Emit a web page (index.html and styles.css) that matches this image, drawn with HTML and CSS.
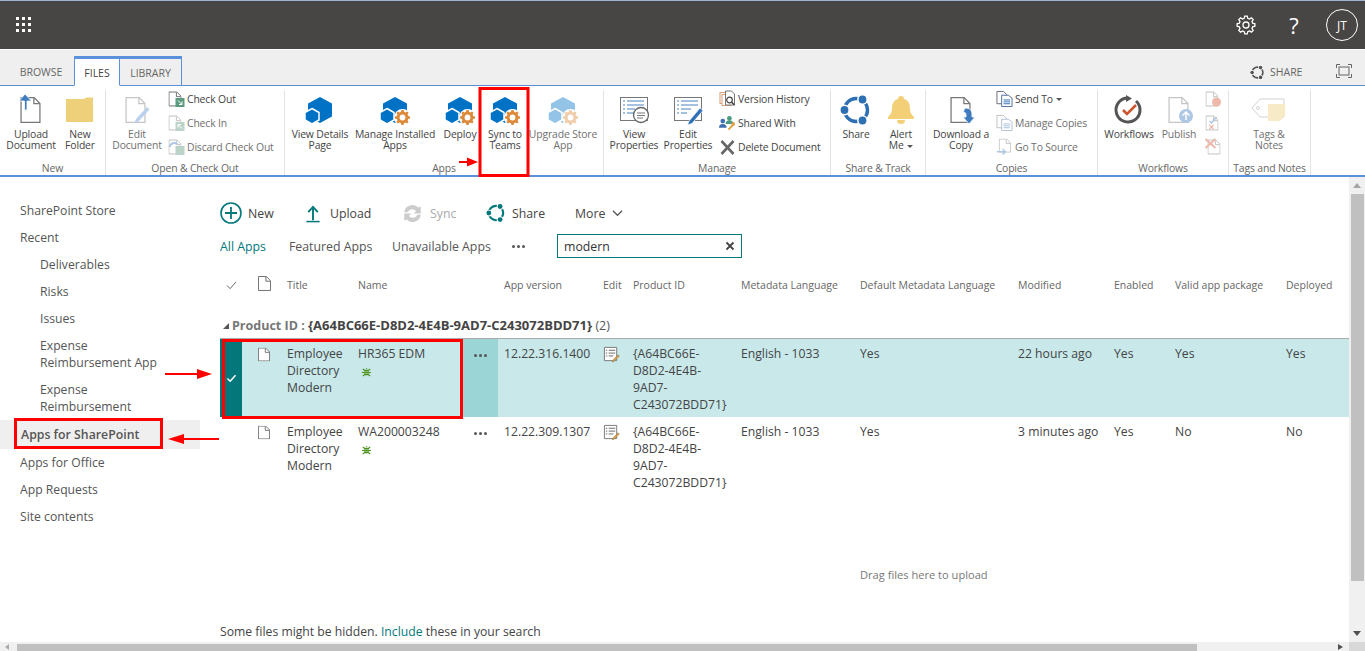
FILE: index.html
```html
<!DOCTYPE html>
<html lang="en">
<head>
<meta charset="utf-8">
<title>Apps for SharePoint</title>
<link rel="stylesheet" href="styles.css">
</head>
<body>
<svg class="defs" aria-hidden="true">
  <defs>
    <polygon id="gearshape" points="8.21,3.34 8.75,1.1 11.25,1.1 11.79,3.34 13.44,4.02 15.41,2.82 17.18,4.59 15.98,6.56 16.66,8.21 18.9,8.75 18.9,11.25 16.66,11.79 15.98,13.44 17.18,15.41 15.41,17.18 13.44,15.98 11.79,16.66 11.25,18.9 8.75,18.9 8.21,16.66 6.56,15.98 4.59,17.18 2.82,15.41 4.02,13.44 3.34,11.79 1.1,11.25 1.1,8.75 3.34,8.21 4.02,6.56 2.82,4.59 4.59,2.82 6.56,4.02"/>
    <symbol id="gear-o" viewBox="0 0 20 20">
      <circle cx="10" cy="10" r="10" fill="#fff"/>
      <use href="#gearshape" fill="#dc8a3a"/>
      <circle cx="10" cy="10" r="3.400" fill="#fff"/>
    </symbol>
    <symbol id="hex" viewBox="0 0 40 32">
      <g transform="translate(0 1)">
        <path d="M20 2l12 6.500v13L20 28 8 21.500v-13z" fill="#0072c6"/>
        <path d="M12 15.500l7 4v7.500l-7 4-7-4v-7.500z" fill="#0072c6" stroke="#fff" stroke-width="1.500" transform="translate(0 -2)"/>
      </g>
    </symbol>
    <symbol id="hexgear" viewBox="0 0 40 32">
      <use href="#hex"/>
      <use href="#gear-o" x="19" y="15" width="17" height="17"/>
    </symbol>
    <symbol id="doc" viewBox="0 0 21 27">
      <path d="M.7.700h13.600l6 6v19.600H.7z" fill="#fff" stroke="#777" stroke-width="1.300"/>
      <path d="M14 1v6h6" fill="none" stroke="#777" stroke-width="1.300"/>
    </symbol>
    <symbol id="doc-s" viewBox="0 0 14 16">
      <path d="M.5.500h8.500l4.500 4.500v10.500H.5z" fill="#fff" stroke="#666"/>
      <path d="M8.500 1v4.500H13" fill="none" stroke="#666"/>
    </symbol>
    <symbol id="lines" viewBox="0 0 18 18">
      <path d="M1 1h7l3 3v10H1z" fill="#fff" stroke="#667"/>
      <path d="M6 5h7l4 3v9H6z" fill="#fff" stroke="#4a6a9a"/>
      <path d="M8 10h7M8 12h7M8 14h7" stroke="#2f6fb5"/>
    </symbol>
    <symbol id="note" viewBox="0 0 20 18">
      <path d="M2.500 1.500h13v14h-13z" fill="#fff" stroke="#777" stroke-width="1"/>
      <path d="M4 4.500h1.500M7 4.500h7M4 7.500h1.500M7 7.500h7M4 10.500h1.500M7 10.500h5" stroke="#666" stroke-width="1"/>
      <path d="M11.500 14.800l5.500-5.500 1.300 1.300-5.500 5.500-2 .7z" fill="#d9a24e" stroke="#8a6a30" stroke-width=".5"/>
    </symbol>
    <symbol id="bug" viewBox="0 0 12 12">
      <path d="M2 2l8 8M10 2l-8 8M1 6h10M6 1v1" stroke="#4d9222" stroke-width="1.300" fill="none"/>
      <rect x="3.500" y="3" width="5" height="6" fill="#4d9222"/>
      <path d="M3.500 5h5M3.500 7h5" stroke="#c8e8c0" stroke-width=".6"/>
    </symbol>
    <symbol id="ring" viewBox="0 0 32 32">
      <circle cx="16" cy="16" r="11.500" fill="none" stroke="currentColor" stroke-width="3.400"/>
      <circle cx="22.500" cy="5.500" r="5.400" fill="#fff"/>
      <circle cx="4.500" cy="16" r="5.400" fill="#fff"/>
      <circle cx="22.500" cy="26.500" r="5.400" fill="#fff"/>
      <circle cx="22.500" cy="5.500" r="3.900" fill="currentColor"/>
      <circle cx="4.500" cy="16" r="3.900" fill="currentColor"/>
      <circle cx="22.500" cy="26.500" r="3.900" fill="currentColor"/>
    </symbol>
  </defs>
</svg>

<header class="suite">
  <div class="waffle"><i></i><i></i><i></i><i></i><i></i><i></i><i></i><i></i><i></i></div>
  <div class="suite-right">
    <svg class="suite-gear" viewBox="0 0 20 20"><use href="#gearshape" fill="none" stroke="#fff" stroke-width="1.300"/><circle cx="10" cy="10" r="3" fill="none" stroke="#fff" stroke-width="1.300"/></svg>
    <span class="suite-help">?</span>
    <span class="avatar">JT</span>
  </div>
</header>

<nav class="tabs">
  <span class="tab">BROWSE</span>
  <span class="tab tab-files">FILES</span>
  <span class="tab tab-lib">LIBRARY</span>
  <div class="tabs-right">
    <svg class="share-ic" viewBox="0 0 32 32"><use href="#ring"/></svg>
    <span class="share-txt">SHARE</span>
    <svg class="focus-ic" viewBox="0 0 16 14"><path d="M.5 4V.5H4M12 .5h3.500V4M15.500 10v3.500H12M4 13.500H.5V10" fill="none" stroke="#666"/><rect x="3" y="3" width="10" height="8" fill="none" stroke="#666"/></svg>
  </div>
</nav>

<section class="ribbon">
  <div class="group g1">
    <div class="cmds">
      <div class="lg w50">
        <svg class="ic" viewBox="0 0 40 32"><g transform="translate(9 3)"><use href="#doc" width="21" height="26"/></g><path d="M13.500 16V7H8l6-7 6.500 7H16v9z" fill="#3f7cbf" stroke="#fff" stroke-width=".8"/></svg>
        <span>Upload<br>Document</span>
      </div>
      <div class="lg w48">
        <svg class="ic" viewBox="0 0 40 32"><path d="M6 5h18l2-1.500h7V28H6z" fill="#eecf7a"/></svg>
        <span>New<br>Folder</span>
      </div>
    </div>
    <div class="glabel">New</div>
  </div>

  <div class="group g2">
    <div class="cmds">
      <div class="lg w50 off">
        <svg class="ic" viewBox="0 0 40 32"><g transform="translate(8 3)"><use href="#doc" width="21" height="26"/></g><path d="M19 25l11-12 2.500 2.500-11 12-4 1.500z" fill="#5b93d0"/></svg>
        <span>Edit<br>Document</span>
      </div>
      <div class="smalls">
        <div class="sm"><svg class="sic" viewBox="0 0 16 18"><use href="#doc-s" width="13" height="16" y="1"/><rect x="7" y="8" width="9" height="9" fill="#5c9a80"/><path d="M9.500 10.500l4 4m0-3v3h-3" stroke="#fff" fill="none"/></svg><span>Check Out</span></div>
        <div class="sm off"><svg class="sic" viewBox="0 0 16 18"><use href="#doc-s" width="13" height="16" y="1"/><rect x="7" y="8" width="9" height="9" fill="#5c9a80"/><path d="M13.500 14.500l-4-4m0 3v-3h3" stroke="#fff" fill="none"/></svg><span>Check In</span></div>
        <div class="sm off"><svg class="sic" viewBox="0 0 16 18"><use href="#doc-s" width="13" height="16" y="1"/><path d="M1 9a5 5 0 0 1 8-3" fill="none" stroke="#3f7cbf" stroke-width="2"/><rect x="7" y="8" width="9" height="9" fill="#5c9a80"/></svg><span>Discard Check Out</span></div>
      </div>
    </div>
    <div class="glabel">Open &amp; Check Out</div>
  </div>

  <div class="group g3">
    <div class="cmds">
      <div class="lg w60"><svg class="ic" viewBox="0 0 40 32"><use href="#hex"/></svg><span>View Details<br>Page</span></div>
      <div class="lg w90"><svg class="ic" viewBox="0 0 40 32"><use href="#hexgear"/></svg><span>Manage Installed<br>Apps</span></div>
      <div class="lg w40"><svg class="ic" viewBox="0 0 40 32"><use href="#hexgear"/></svg><span>Deploy</span></div>
      <div class="lg w50"><svg class="ic" viewBox="0 0 40 32"><use href="#hexgear"/></svg><span>Sync to<br>Teams</span></div>
      <div class="lg w66 off"><svg class="ic" viewBox="0 0 40 32"><use href="#hexgear"/></svg><span>Upgrade Store<br>App</span></div>
    </div>
    <div class="glabel">Apps</div>
  </div>

  <div class="group g4">
    <div class="cmds">
      <div class="lg w60">
        <svg class="ic" viewBox="0 0 40 32"><rect x="6.500" y="3.500" width="27" height="23" fill="#fff" stroke="#777"/><path d="M9 7h2M13 7h17M9 11h2M13 11h17M9 15h2M13 15h8M9 19h2M13 19h8" stroke="#4a82c4"/><circle cx="27" cy="21" r="7.500" fill="#fff" stroke="#666" stroke-width="1.300"/><path d="M23 19h8M23 21.500h8M23 24h6" stroke="#777"/></svg>
        <span>View<br>Properties</span>
      </div>
      <div class="lg w48">
        <svg class="ic" viewBox="0 0 40 32"><rect x="6.500" y="3.500" width="27" height="23" fill="#fff" stroke="#777"/><path d="M9 7h2M13 7h17M9 11h2M13 11h17M9 15h2M13 15h10M9 19h2M13 19h6" stroke="#4a82c4"/><path d="M21 27l11-13 3 2.500-11 13-4.500 1.500z" fill="#2f72b8" stroke="#fff" stroke-width=".7"/></svg>
        <span>Edit<br>Properties</span>
      </div>
      <div class="smalls">
        <div class="sm"><svg class="sic" viewBox="0 0 16 18"><rect x=".5" y="2.500" width="9" height="11" fill="#fff" stroke="#d9a077"/><rect x="2.500" y="4.500" width="9" height="11" fill="#fff" stroke="#d9a077"/><path d="M6 1h6l3 3v11H6z" fill="#fff" stroke="#777"/><circle cx="10" cy="10" r="2.800" fill="none" stroke="#444" stroke-width="1.200"/><path d="M12 12l3 3" stroke="#444" stroke-width="1.500"/></svg><span>Version History</span></div>
        <div class="sm"><svg class="sic" viewBox="0 0 18 18"><circle cx="4" cy="7" r="2.500" fill="#3f6fb0"/><path d="M0 14a4 4 0 0 1 8 0z" fill="#3f6fb0"/><circle cx="11" cy="4" r="2.500" fill="#4a9a80"/><path d="M7 10a4 4 0 0 1 8 0z" fill="#4a9a80"/><path d="M10 16l5-5" stroke="#e0a040" stroke-width="2"/><circle cx="15" cy="10" r="2" fill="#e0a040"/></svg><span>Shared With</span></div>
        <div class="sm"><svg class="sic" viewBox="0 0 16 18"><path d="M2 3l12 13M14 3L2 16" stroke="#666" stroke-width="2.600"/></svg><span>Delete Document</span></div>
      </div>
    </div>
    <div class="glabel">Manage</div>
  </div>

  <div class="group g5">
    <div class="cmds">
      <div class="lg w50"><svg class="ic ring-blue" viewBox="-4 0 40 32"><use href="#ring" width="32" height="32"/></svg><span>Share</span></div>
      <div class="lg w40"><svg class="ic" viewBox="0 0 40 32"><path d="M20 2a3 3 0 0 1 3 3c5 1 6 6 6 10 0 4 2 6 4 8v2H7v-2c2-2 4-4 4-8 0-4 1-9 6-10a3 3 0 0 1 3-3z" fill="#f3d078"/><path d="M16 26h8a4 4 0 0 1-8 0z" fill="#f3d078"/></svg><span>Alert<br>Me <b class="caret"></b></span></div>
    </div>
    <div class="glabel">Share &amp; Track</div>
  </div>

  <div class="group g6">
    <div class="cmds">
      <div class="lg w62">
        <svg class="ic" viewBox="0 0 40 32"><g transform="translate(9 3)"><use href="#doc" width="21" height="26"/></g><path d="M24 14c6 0 7 3 7 7v2h3l-6 7-6-7h3v-2c0-2-1-3-3-3z" fill="#3f7cbf" stroke="#fff" stroke-width=".8"/></svg>
        <span>Download a<br>Copy</span>
      </div>
      <div class="smalls">
        <div class="sm"><svg class="sic" viewBox="0 0 18 18"><use href="#lines"/></svg><span>Send To <b class="caret"></b></span></div>
        <div class="sm off"><svg class="sic" viewBox="0 0 18 18"><use href="#lines"/></svg><span>Manage Copies</span></div>
        <div class="sm off"><svg class="sic" viewBox="0 0 18 18"><use href="#doc-s" x="3" width="13" height="15"/><path d="M1 14h9M7 11l3 3-3 3" stroke="#3f7cbf" stroke-width="1.500" fill="none"/></svg><span>Go To Source</span></div>
      </div>
    </div>
    <div class="glabel">Copies</div>
  </div>

  <div class="group g7">
    <div class="cmds">
      <div class="lg w60"><svg class="ic" viewBox="0 0 40 32"><path d="M27 7a12 12 0 1 1-9-3" fill="none" stroke="#555" stroke-width="3"/><path d="M17 1l6 3.500-6 3.500z" fill="#555"/><path d="M14 16l4 4 9-9" fill="none" stroke="#c9562f" stroke-width="2.500"/></svg><span>Workflows</span></div>
      <div class="lg w40 off"><svg class="ic" viewBox="0 0 40 32"><g transform="translate(9 3)"><use href="#doc" width="21" height="26"/></g><circle cx="27" cy="22" r="7" fill="#3f7cbf"/><path d="M27 26v-8M23.500 21.500l3.500-3.500 3.500 3.500" stroke="#fff" stroke-width="1.500" fill="none"/></svg><span>Publish</span></div>
      <div class="smalls tiny off">
        <div class="sm"><svg class="sic" viewBox="0 0 16 18"><use href="#doc-s" width="13" height="16" y="1"/><circle cx="11" cy="12" r="4.500" fill="#d9573a"/></svg></div>
        <div class="sm"><svg class="sic" viewBox="0 0 16 18"><use href="#doc-s" width="13" height="16" y="1"/><path d="M4 7l2 2 5-6" stroke="#2f72b8" fill="none" stroke-width="1.300"/><path d="M4 11l4 4m0-4l-4 4" stroke="#d9573a" stroke-width="1.300"/></svg></div>
        <div class="sm"><svg class="sic" viewBox="0 0 16 18"><use href="#doc-s" x="2" width="13" height="16" y="1"/><path d="M0 1l10 9M10 1L0 10" stroke="#d9573a" stroke-width="2"/></svg></div>
      </div>
    </div>
    <div class="glabel">Workflows</div>
  </div>

  <div class="group g8">
    <div class="cmds">
      <div class="lg w80 off"><svg class="ic" viewBox="0 0 40 32"><path d="M11 5h24v18H11l-8-9z" fill="#fff" stroke="#999"/><circle cx="9" cy="14" r="1.500" fill="none" stroke="#999"/><path d="M19 10h17v12l-5 5H19z" fill="#eecf7a"/></svg><span>Tags &amp;<br>Notes</span></div>
    </div>
    <div class="glabel">Tags and Notes</div>
  </div>
</section>

<div class="body-row">
  <aside class="nav">
    <a>SharePoint Store</a>
    <a>Recent</a>
    <a class="sub">Deliverables</a>
    <a class="sub">Risks</a>
    <a class="sub">Issues</a>
    <a class="sub">Expense<br>Reimbursement App</a>
    <a class="sub">Expense<br>Reimbursement</a>
    <a class="cur">Apps for SharePoint</a>
    <a>Apps for Office</a>
    <a>App Requests</a>
    <a>Site contents</a>
  </aside>

  <main class="main">
    <div class="toolbar">
      <div class="tool t-new"><svg class="tic" viewBox="0 0 22 22"><circle cx="11" cy="11" r="10" fill="none" stroke="#03787c" stroke-width="1.600"/><path d="M11 5v12M5 11h12" stroke="#03787c" stroke-width="1.800"/></svg><span>New</span></div>
      <div class="tool t-up"><svg class="tic" viewBox="0 0 16 20"><path d="M8 17V4M3 8.500L8 3l5 5.500" fill="none" stroke="#03787c" stroke-width="2"/><path d="M1 18.500h14" stroke="#03787c" stroke-width="1.600"/></svg><span>Upload</span></div>
      <div class="tool t-sync off"><svg class="tic" viewBox="2 2 16 16"><path d="M3 9a7 7 0 0 1 12-4l2-1v6h-6l2-2a4 4 0 0 0-7 1zM17 11a7 7 0 0 1-12 4l-2 1v-6h6l-2 2a4 4 0 0 0 7-1z" fill="#888"/></svg><span>Sync</span></div>
      <div class="tool t-share"><svg class="tic" viewBox="0 0 32 32"><use href="#ring" width="32" height="32"/></svg><span>Share</span></div>
      <div class="tool t-more"><span>More</span><svg class="chev" viewBox="0 0 12 8"><path d="M1 1.500l5 5 5-5" fill="none" stroke="#555" stroke-width="1.300"/></svg></div>
    </div>

    <div class="views">
      <span class="view v-all">All Apps</span>
      <span class="view v-feat">Featured Apps</span>
      <span class="view v-un">Unavailable Apps</span>
      <span class="view v-more"><i></i><i></i><i></i></span>
      <div class="search"><span>modern</span><svg class="x" viewBox="0 0 10 10"><path d="M1.500 1.500l7 7M8.500 1.500l-7 7" stroke="#444" stroke-width="1.800"/></svg></div>
    </div>

    <div class="grid head">
      <span class="c-chk"><svg class="hchk" viewBox="0 0 12 10"><path d="M1 5l3.500 3.500L11 1" fill="none" stroke="#666" stroke-width="1.100"/></svg></span>
      <span class="c-ic"><svg class="fdoc" viewBox="0 0 14 16"><use href="#doc-s"/></svg></span>
      <span>Title</span><span>Name</span><span></span><span class="c-ver">App version</span><span>Edit</span><span>Product ID</span><span>Metadata Language</span><span>Default Metadata Language</span><span>Modified</span><span>Enabled</span><span>Valid app package</span><span>Deployed</span>
    </div>

    <div class="grouphead"><b class="tri"></b><span class="gk">Product ID :</span> <span class="gv">{A64BC66E-D8D2-4E4B-9AD7-C243072BDD71}</span> <span class="gc">(2)</span></div>

    <div class="grid row sel">
      <span class="c-chk"><svg class="rchk" viewBox="0 0 12 10"><path d="M1.500 5l3 3L10.500 1.500" fill="none" stroke="#fff" stroke-width="1.700"/></svg></span>
      <span class="c-ic"><svg class="fdoc" viewBox="0 0 14 16"><use href="#doc-s"/></svg></span>
      <span>Employee<br>Directory<br>Modern</span>
      <span>HR365 EDM<svg class="bug" viewBox="0 0 12 12"><use href="#bug"/></svg></span>
      <span class="c-dots"><i></i><i></i><i></i></span>
      <span class="c-ver">12.22.316.1400</span>
      <span><svg class="edit" viewBox="0 0 20 18"><use href="#note"/></svg></span>
      <span>{A64BC66E-<br>D8D2-4E4B-<br>9AD7-<br>C243072BDD71}</span>
      <span>English - 1033</span><span>Yes</span><span>22 hours ago</span><span>Yes</span><span>Yes</span><span>Yes</span>
    </div>
    <div class="grid row">
      <span class="c-chk"></span>
      <span class="c-ic"><svg class="fdoc" viewBox="0 0 14 16"><use href="#doc-s"/></svg></span>
      <span>Employee<br>Directory<br>Modern</span>
      <span>WA200003248<svg class="bug" viewBox="0 0 12 12"><use href="#bug"/></svg></span>
      <span class="c-dots"><i></i><i></i><i></i></span>
      <span class="c-ver">12.22.309.1307</span>
      <span><svg class="edit" viewBox="0 0 20 18"><use href="#note"/></svg></span>
      <span>{A64BC66E-<br>D8D2-4E4B-<br>9AD7-<br>C243072BDD71}</span>
      <span>English - 1033</span><span>Yes</span><span>3 minutes ago</span><span>Yes</span><span>No</span><span>No</span>
    </div>

    <div class="drag">Drag files here to upload</div>
    <div class="hidden-note">Some files might be hidden. <a>Include</a> these in your search</div>
  </main>

  <div class="vbar">
    <b class="up"></b>
    <div class="vthumb"></div>
    <b class="down"></b>
  </div>
</div>

<div class="hbar">
  <b class="left"></b>
  <div class="hthumb"></div>
  <b class="right"></b>
  <div class="corner"></div>
</div>

<svg class="annot" viewBox="0 0 1365 651" aria-hidden="true">
  <g fill="none" stroke="#f00" stroke-width="3">
    <rect x="480" y="88.500" width="48" height="87"/>
    <rect x="223.500" y="340.500" width="238" height="77"/>
    <rect x="15.500" y="419.500" width="146" height="28"/>
  </g>
  <g fill="#f00">
    <path d="M459 161h8v-3.500l11 4.500-11 4.500V163h-8z"/>
    <path d="M165 373h32v-4l15 5-15 5v-4h-32z"/>
    <path d="M219 438h-35v-4l-16 5 16 5v-4h35z"/>
  </g>
</svg>
</body>
</html>
```
FILE: styles.css
```css
* { box-sizing: border-box; }
html, body { margin: 0; height: 651px; overflow: hidden; }
body {
  position: relative;
  display: flex;
  flex-direction: column;
  width: 1365px;
  background: #fff;
  color: #444;
  font-family: "Open Sans", "Liberation Sans", sans-serif;
  font-size: 12.200px;
}
.defs { position: absolute; width: 0; height: 0; }

/* Suite bar */
.suite {
  flex: none;
  height: 50px;
  display: flex;
  align-items: center;
  justify-content: space-between;
  padding: 0 7px 0 16px;
  background: #484644;
  border-top: 1px solid #9fb0d0;
  border-bottom: 1px solid #fff;
}
.waffle { display: grid; grid-template-columns: repeat(3, 3px); grid-auto-rows: 3px; gap: 3px; margin-top: -1px; }
.waffle i { background: #fff; }
.suite-right { display: flex; align-items: center; color: #fff; }
.suite-gear { width: 20px; height: 20px; }
.suite-help { width: 20px; margin-left: 28px; font-size: 22px; line-height: 24px; text-align: center; }
.avatar {
  width: 32px; height: 32px; margin-left: 22px;
  display: flex; align-items: center; justify-content: center;
  border: 1px solid #fff; border-radius: 50%;
  font-size: 12px; color: #fff;
}

/* Tabs */
.tabs {
  flex: none;
  position: relative;
  height: 36px;
  display: flex;
  align-items: flex-end;
  padding: 0 13px 0 8px;
  background: #efefef;
  border-bottom: 1px solid #5a8fd0;
  font-size: 10.500px;
  color: #666;
}
.tab { width: 66px; height: 30px; line-height: 33px; text-align: center; margin-bottom: -1px; }
.tab-files, .tab-lib { border: 1px solid #5a90dc; border-top-width: 3px; line-height: 28px; }
.tab-files { width: 46px; background: #fff; border-bottom-color: #fff; color: #444; }
.tab-lib { width: 62px; border-left: 0; }
.tabs-right { margin-left: auto; align-self: center; display: flex; align-items: center; margin-top: 9px; }
.share-ic { width: 15px; height: 15px; color: #555; }
.share-txt { margin-left: 5px; width: 34px; }
.focus-ic { width: 16px; height: 14px; margin-left: 32px; margin-top: -2px; }

/* Ribbon */
.ribbon {
  flex: none;
  height: 91px;
  display: flex;
  border-bottom: 2px solid #5a90dc;
  font-size: 10.400px;
  letter-spacing: -.15px;
  line-height: 11px;
  color: #444;
}
.group {
  display: flex;
  flex-direction: column;
  height: 85px;
  margin-top: 4px;
  border-right: 1px solid #e3e3e3;
}
.g1 { width: 106px; }
.g2 { width: 179px; }
.g3 { width: 319px; }
.g4 { width: 227px; }
.g5 { width: 95px; }
.g6 { width: 172px; }
.g7 { width: 131px; }
.g8 { width: 82px; }
.g1 .cmds, .g2 .cmds { padding-left: 6px; }
.g3 .cmds { padding-left: 5px; }
.g6 .cmds { padding-left: 4px; }
.g7 .cmds { padding-left: 1px; }
.cmds { flex: 1; display: flex; }
.lg { display: flex; flex-direction: column; align-items: center; text-align: center; white-space: nowrap; padding-top: 4px; }
.lg > span { margin-top: 3px; }
.ic { display: block; width: 40px; height: 32px; flex: none; }
.ring-blue { color: #2d6fb3; }
.w40 { width: 40px; } .w48 { width: 48px; } .w50 { width: 50px; } .w60 { width: 60px; }
.w62 { width: 62px; } .w66 { width: 66px; } .w80 { width: 80px; } .w90 { width: 90px; }
.g2 .smalls { margin-left: 6px; }
.g4 .smalls { margin-left: 7px; }
.g6 .smalls { margin-left: 4px; }
.g7 .smalls { margin-left: 6px; }
.smalls { display: flex; flex-direction: column; margin-top: -3px; }
.sm { height: 24px; display: flex; align-items: center; white-space: nowrap; }
.sm > span { margin-left: 2px; }
.sic { width: 17px; height: 18px; flex: none; }
.off svg { opacity: .42; }
.lg.off span, .sm.off span { color: #707070; }
.caret { display: inline-block; margin-left: 1px; border: 3px solid transparent; border-top: 3px solid #555; border-bottom: 0; vertical-align: middle; }
.glabel { height: 16px; line-height: 19px; text-align: center; color: #666; }

/* Body */
.body-row { flex: 1; min-height: 0; display: flex; }
.nav { flex: none; width: 200px; padding-top: 20px; color: #555; }
.nav a { display: block; padding: 5px 0 5px 20px; line-height: 17px; }
.nav a.sub { padding-left: 40px; }
.nav a.cur { padding-top: 6px; padding-bottom: 6px; padding-left: 21px; background: #efefef; font-weight: 600; font-size: 12.300px; color: #555; }

.main {
  flex: 1;
  min-width: 0;
  margin-left: 20px;
  display: flex;
  flex-direction: column;
}
.toolbar { display: flex; height: 28px; margin-top: 22px; font-size: 12.300px; }
.tool { display: flex; align-items: center; flex: none; }
.t-new { width: 85px; }
.t-up { width: 98px; }
.t-sync { width: 83px; }
.t-share { width: 89px; }
.tic { flex: none; height: 22px; width: 22px; margin-right: 6px; }
.t-up .tic { width: 16px; height: 19px; margin-right: 9px; }
.t-sync .tic { width: 19px; height: 19px; margin-right: 8px; }
.t-share .tic { width: 20px; height: 20px; margin-right: 6px; color: #03787c; }
.t-sync.off span { color: #aaa; }
.chev { width: 11px; height: 8px; margin-left: 7px; }

.views { display: flex; align-items: center; height: 24px; margin-top: 7px; font-size: 12.300px; color: #555; }
.view { flex: none; }
.v-all { width: 69px; color: #03787c; }
.v-feat { width: 103px; }
.v-un { width: 120px; }
.v-more { width: 45px; display: flex; gap: 2px; }
.v-more i, .c-dots i { width: 3px; height: 3px; background: #555; border-radius: 50%; }
.search {
  width: 185px; height: 24px;
  display: flex; align-items: center; justify-content: space-between;
  padding: 0 6px;
  border: 1px solid #03787c;
  color: #333;
}
.x { width: 10px; height: 10px; }

.grid {
  display: grid;
  grid-template-columns: 22px 45px 71px 105px 35px 105px 30px 108px 119px 158px 96px 61px 111px 63px;
}
.head { height: 20px; margin-top: 17px; align-items: center; font-size: 10.500px; color: #666; }
.c-chk { display: flex; justify-content: center; }
.hchk { width: 11px; height: 9px; }
.fdoc { display: block; width: 12px; height: 15px; margin-left: 16px; }
.head .fdoc { margin-top: -4px; width: 13px; }
.c-ver { padding-left: 6px; }

.grouphead { height: 24px; margin-top: 20px; padding-left: 3px; border-bottom: 1px solid #aaa; line-height: 21px; font-size: 12.500px; white-space: nowrap; }
.tri { display: inline-block; width: 0; height: 0; margin-right: 3px; border-style: solid; border-width: 0 0 6px 6px; border-color: transparent transparent #555 transparent; vertical-align: 1px; }
.gk { font-weight: 700; color: #777; }
.gv { font-weight: 700; font-size: 13px; color: #444; }
.gc { color: #555; }

.row { height: 78px; padding-top: 6px; line-height: 17px; color: #444; }
.row.sel { background: #c8e8ea; }
.row.sel .c-chk { background: #04777b; margin-top: -6px; align-items: center; }
.rchk { width: 11px; height: 9px; }
.row .fdoc { margin-top: 2px; }
.row.sel .fdoc path { fill: #fff; }
.bug { display: block; width: 11px; height: 11px; margin: 5px 0 0 3px; }
.c-dots { display: flex; justify-content: center; gap: 2px; padding-top: 9px; }
.row.sel .c-dots { background: #9bd5d6; margin-top: -6px; padding-top: 15px; }
.edit { display: block; width: 19px; height: 17px; margin: 1px 0 0 -1px; }

.drag { margin-top: 71px; padding-left: 640px; line-height: 17px; font-size: 11.100px; color: #777; }
.hidden-note { margin-top: auto; margin-bottom: 2px; line-height: 17px; color: #444; }
.hidden-note a { color: #03787c; }

/* Scrollbars */
.vbar { flex: none; width: 16px; background: #f0f0f0; display: flex; flex-direction: column; align-items: center; }
.vthumb { width: 13px; height: 387px; margin: 6px 0 0 1px; background: #c0c0c0; flex: none; }
.up, .down { flex: none; width: 0; height: 0; border: 4px solid transparent; }
.up { margin-top: 6px; border-top: 0; border-bottom: 5px solid #a5a5a5; }
.down { margin-top: auto; margin-bottom: 6px; border-bottom: 0; border-top: 5px solid #505050; }
.hbar { flex: none; height: 9px; display: flex; align-items: flex-end; background: #f0f0f0; }
.left, .right { flex: none; width: 0; height: 0; border: 3px solid transparent; margin-bottom: 1px; }
.left { margin-left: 5px; border-left: 0; border-right: 4px solid #aaa; }
.hthumb { width: 1180px; height: 7px; margin-left: 8px; background: #c0c0c0; }
.right { margin-left: auto; border-right: 0; border-left: 5px solid #505050; }
.corner { width: 16px; height: 9px; margin-left: 6px; background: #d8d8d8; }

.annot { position: absolute; left: 0; top: 0; width: 1365px; height: 651px; pointer-events: none; }
```
